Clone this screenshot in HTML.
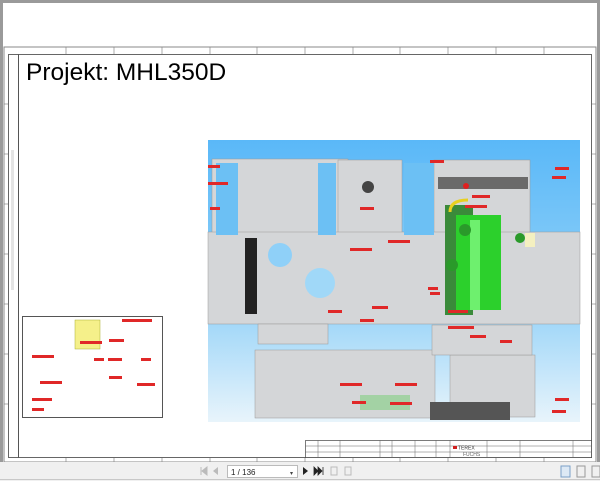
<!DOCTYPE html>
<html><head><style>
html,body{margin:0;padding:0;width:600px;height:481px;overflow:hidden;background:#fff;font-family:"Liberation Sans",sans-serif}
</style></head><body>
<svg width="600" height="481" viewBox="0 0 600 481" xmlns="http://www.w3.org/2000/svg" font-family="Liberation Sans, sans-serif">
<defs>
<linearGradient id="sky" x1="0" y1="0" x2="0" y2="1">
<stop offset="0" stop-color="#5ab8f8"/><stop offset="0.55" stop-color="#8fd0f8"/><stop offset="1" stop-color="#e8f4fb"/>
</linearGradient>
</defs>
<rect width="600" height="481" fill="#fff"/>
<rect x="0" y="0" width="3" height="462" fill="#9a9a9a"/>
<rect x="597" y="0" width="3" height="462" fill="#9a9a9a"/>
<rect x="0" y="0" width="600" height="3" fill="#9a9a9a"/>
<rect x="4" y="47" width="592" height="415" fill="#fff" stroke="#888" stroke-width="1"/>
<rect x="8.5" y="54.5" width="583" height="403" fill="none" stroke="#666"/>
<line x1="18.5" y1="54" x2="18.5" y2="458" stroke="#555"/>
<g stroke="#888" stroke-width="0.7">
<line x1="66" y1="47" x2="66" y2="54"/><line x1="114" y1="47" x2="114" y2="54"/><line x1="162" y1="47" x2="162" y2="54"/><line x1="210" y1="47" x2="210" y2="54"/><line x1="257" y1="47" x2="257" y2="54"/><line x1="305" y1="47" x2="305" y2="54"/><line x1="353" y1="47" x2="353" y2="54"/><line x1="400" y1="47" x2="400" y2="54"/><line x1="448" y1="47" x2="448" y2="54"/><line x1="496" y1="47" x2="496" y2="54"/><line x1="544" y1="47" x2="544" y2="54"/>
<line x1="66" y1="458" x2="66" y2="462"/><line x1="114" y1="458" x2="114" y2="462"/><line x1="162" y1="458" x2="162" y2="462"/><line x1="210" y1="458" x2="210" y2="462"/><line x1="257" y1="458" x2="257" y2="462"/><line x1="305" y1="458" x2="305" y2="462"/><line x1="353" y1="458" x2="353" y2="462"/><line x1="400" y1="458" x2="400" y2="462"/><line x1="448" y1="458" x2="448" y2="462"/><line x1="496" y1="458" x2="496" y2="462"/><line x1="544" y1="458" x2="544" y2="462"/>
<line x1="4" y1="104" x2="8" y2="104"/><line x1="4" y1="154" x2="8" y2="154"/><line x1="4" y1="204" x2="8" y2="204"/><line x1="4" y1="254" x2="8" y2="254"/><line x1="4" y1="304" x2="8" y2="304"/><line x1="4" y1="354" x2="8" y2="354"/><line x1="4" y1="404" x2="8" y2="404"/>
<line x1="592" y1="104" x2="596" y2="104"/><line x1="592" y1="154" x2="596" y2="154"/><line x1="592" y1="204" x2="596" y2="204"/><line x1="592" y1="254" x2="596" y2="254"/><line x1="592" y1="304" x2="596" y2="304"/><line x1="592" y1="354" x2="596" y2="354"/><line x1="592" y1="404" x2="596" y2="404"/>
</g>
<rect x="11" y="150" width="3" height="140" fill="#e4e4e4"/>
<text x="26" y="80" font-size="24.5" fill="#000">Projekt: MHL350D</text>
<rect x="208" y="140" width="372" height="282" fill="url(#sky)"/>
<g fill="#d4d6d8" stroke="#999" stroke-width="0.5">
<rect x="212" y="159" width="136" height="80"/>
<rect x="338" y="160" width="64" height="82"/>
<rect x="434" y="160" width="96" height="80"/>
<rect x="208" y="232" width="372" height="92"/>
<rect x="258" y="324" width="70" height="20"/>
<rect x="255" y="350" width="180" height="68"/>
<rect x="450" y="355" width="85" height="62"/>
<rect x="432" y="325" width="100" height="30"/>
</g>
<rect x="216" y="163" width="22" height="72" fill="#6cc0f4"/>
<rect x="318" y="163" width="18" height="72" fill="#6cc0f4"/>
<rect x="404" y="163" width="30" height="72" fill="#6cc0f4"/>
<rect x="245" y="238" width="12" height="76" fill="#222"/>
<circle cx="280" cy="255" r="12" fill="#8fd0f8"/>
<circle cx="320" cy="283" r="15" fill="#a0d8f8"/>
<circle cx="368" cy="187" r="6" fill="#444"/>
<rect x="438" y="177" width="90" height="12" fill="#6a6a6a"/>
<rect x="445" y="205" width="28" height="110" fill="#3a8a3a"/>
<rect x="456" y="215" width="45" height="95" fill="#2cd02c"/>
<rect x="470" y="220" width="10" height="90" fill="#6ef06e"/>
<circle cx="465" cy="230" r="6" fill="#2a9a2a"/>
<circle cx="452" cy="265" r="6" fill="#2a9a2a"/>
<circle cx="520" cy="238" r="5" fill="#2a9a2a"/>
<path d="M450 212 q0 -12 18 -12" stroke="#e8d020" stroke-width="3" fill="none"/>
<circle cx="466" cy="186" r="3" fill="#e02020"/>
<rect x="525" y="233" width="10" height="14" fill="#f4f0c0"/>
<rect x="360" y="395" width="50" height="15" fill="#8ed08e" opacity="0.7"/>
<rect x="430" y="402" width="80" height="18" fill="#555"/>
<g fill="#e02828">
<rect x="208" y="165" width="12" height="3"/><rect x="208" y="182" width="20" height="3"/><rect x="210" y="207" width="10" height="3"/>
<rect x="430" y="160" width="14" height="3"/><rect x="472" y="195" width="18" height="3"/><rect x="465" y="205" width="22" height="3"/>
<rect x="360" y="207" width="14" height="3"/><rect x="388" y="240" width="22" height="3"/><rect x="428" y="287" width="10" height="3"/>
<rect x="430" y="292" width="10" height="3"/><rect x="448" y="310" width="20" height="3"/><rect x="448" y="326" width="26" height="3"/>
<rect x="328" y="310" width="14" height="3"/><rect x="372" y="306" width="16" height="3"/><rect x="360" y="319" width="14" height="3"/>
<rect x="470" y="335" width="16" height="3"/><rect x="500" y="340" width="12" height="3"/><rect x="340" y="383" width="22" height="3"/>
<rect x="395" y="383" width="22" height="3"/><rect x="352" y="401" width="14" height="3"/><rect x="390" y="402" width="22" height="3"/>
<rect x="555" y="398" width="14" height="3"/><rect x="552" y="410" width="14" height="3"/><rect x="555" y="167" width="14" height="3"/><rect x="552" y="176" width="14" height="3"/>
<rect x="350" y="248" width="22" height="3"/>
</g>
<rect x="22.5" y="316.5" width="140" height="101" fill="#fff" stroke="#555"/>
<rect x="75" y="320" width="25" height="29" fill="#f5f08a" stroke="#aab030" stroke-width="0.5"/>
<g fill="#e02828">
<rect x="122" y="319" width="30" height="3"/><rect x="80" y="341" width="22" height="3"/><rect x="109" y="339" width="15" height="3"/>
<rect x="32" y="355" width="22" height="3"/><rect x="94" y="358" width="10" height="3"/><rect x="108" y="358" width="14" height="3"/><rect x="141" y="358" width="10" height="3"/>
<rect x="40" y="381" width="22" height="3"/><rect x="109" y="376" width="13" height="3"/><rect x="137" y="383" width="18" height="3"/>
<rect x="32" y="398" width="20" height="3"/><rect x="32" y="408" width="12" height="3"/>
</g>
<rect x="305.5" y="440.5" width="286" height="17" fill="#fff" stroke="#444" stroke-width="0.7"/>
<g stroke="#666" stroke-width="0.5">
<line x1="318" y1="440" x2="318" y2="458"/><line x1="340" y1="440" x2="340" y2="458"/><line x1="380" y1="440" x2="380" y2="458"/><line x1="392" y1="440" x2="392" y2="458"/><line x1="415" y1="440" x2="415" y2="458"/><line x1="436" y1="440" x2="436" y2="458"/><line x1="450" y1="440" x2="450" y2="458"/><line x1="487" y1="440" x2="487" y2="458"/><line x1="520" y1="440" x2="520" y2="458"/><line x1="573" y1="440" x2="573" y2="458"/>
<line x1="305" y1="446" x2="592" y2="446"/><line x1="305" y1="452" x2="592" y2="452"/>
</g>
<rect x="453" y="446" width="4" height="3" fill="#d02020"/>
<text x="458" y="449.5" font-size="5" fill="#333">TEREX</text>
<text x="463" y="456" font-size="5" fill="#666">FUCHS</text>
<rect x="0" y="462" width="600" height="19" fill="#f0f0f0"/>
<line x1="0" y1="479.5" x2="600" y2="479.5" stroke="#c8c8c8"/>
<rect x="227.5" y="465.5" width="70" height="12" fill="#fff" stroke="#bbb"/>
<text x="231" y="475" font-size="8" fill="#222">1 / 136</text>
<text x="290" y="475" font-size="6" fill="#444">▾</text>
<path d="M201 467v8M207 467l-5 4 5 4z" fill="#bbb" stroke="#bbb"/>
<path d="M218 467l-5 4 5 4z" fill="#bbb"/>
<path d="M303 467l5 4-5 4z" fill="#222"/>
<path d="M314 467l4 4-4 4zM318 467l4 4-4 4zM323 467v8" fill="#222" stroke="#222" stroke-width="0.8"/>
<rect x="331" y="467" width="6" height="8" fill="none" stroke="#bbb"/>
<rect x="345" y="467" width="6" height="8" fill="none" stroke="#bbb"/>
<rect x="561" y="466" width="9" height="11" fill="#dde9f5" stroke="#7aa0c8"/>
<rect x="577" y="466" width="8" height="11" fill="none" stroke="#999"/>
<rect x="592" y="466" width="8" height="11" fill="none" stroke="#999"/>
</svg>
</body></html>
